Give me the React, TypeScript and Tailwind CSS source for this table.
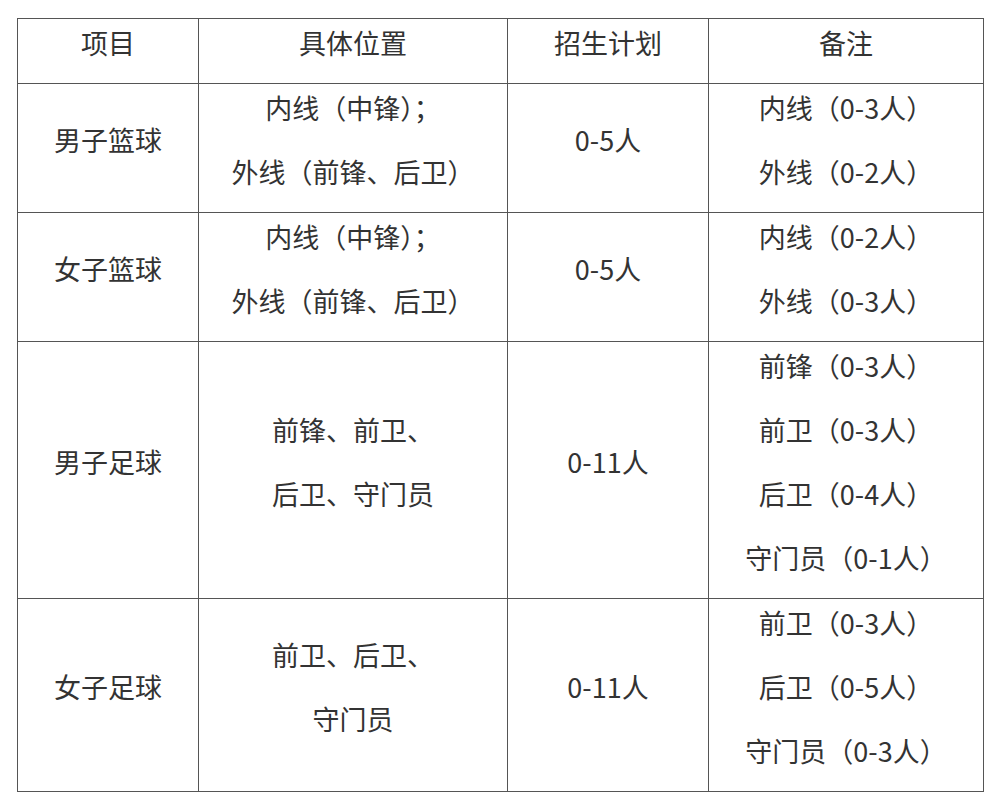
import React from "react";

const rows: { a: string[]; b: string[]; c: string[]; d: string[]; h: string }[] = [
  { a: ["男子篮球"], b: ["内线（中锋）；", "外线（前锋、后卫）"], c: ["0-5人"], d: ["内线（0-3人）", "外线（0-2人）"], h: "h-[128px]" },
  { a: ["女子篮球"], b: ["内线（中锋）；", "外线（前锋、后卫）"], c: ["0-5人"], d: ["内线（0-2人）", "外线（0-3人）"], h: "h-[128px]" },
  { a: ["男子足球"], b: ["前锋、前卫、", "后卫、守门员"], c: ["0-11人"], d: ["前锋（0-3人）", "前卫（0-3人）", "后卫（0-4人）", "守门员（0-1人）"], h: "h-[256px]" },
  { a: ["女子足球"], b: ["前卫、后卫、", "守门员"], c: ["0-11人"], d: ["前卫（0-3人）", "后卫（0-5人）", "守门员（0-3人）"], h: "h-[192px]" },
];

function Cell({ lines, h }: { lines: string[]; h: string }) {
  return (
    <div className={`bg-white flex flex-col items-center justify-center ${h}`}>
      <div className="-translate-y-[8px] flex flex-col items-center">
        {lines.map((l, i) => (
          <div key={i} className="leading-[64px] whitespace-nowrap">
            {l}
          </div>
        ))}
      </div>
    </div>
  );
}

export default function App() {
  return (
    <div className="w-[1000px] h-[802px] bg-white pt-[18px] pl-[17px]">
      <div
        className="w-[967px] grid grid-cols-[180px_308px_200px_274px] gap-px bg-[#555] border border-[#555] text-[27px] text-[#333]"
        style={{ fontFamily: '"Noto Sans CJK SC", "Noto Sans", sans-serif' }}
      >
        <Cell lines={["项目"]} h="h-[64px]" />
        <Cell lines={["具体位置"]} h="h-[64px]" />
        <Cell lines={["招生计划"]} h="h-[64px]" />
        <Cell lines={["备注"]} h="h-[64px]" />
        {rows.map((r, i) => (
          <React.Fragment key={i}>
            <Cell lines={r.a} h={r.h} />
            <Cell lines={r.b} h={r.h} />
            <Cell lines={r.c} h={r.h} />
            <Cell lines={r.d} h={r.h} />
          </React.Fragment>
        ))}
      </div>
    </div>
  );
}
